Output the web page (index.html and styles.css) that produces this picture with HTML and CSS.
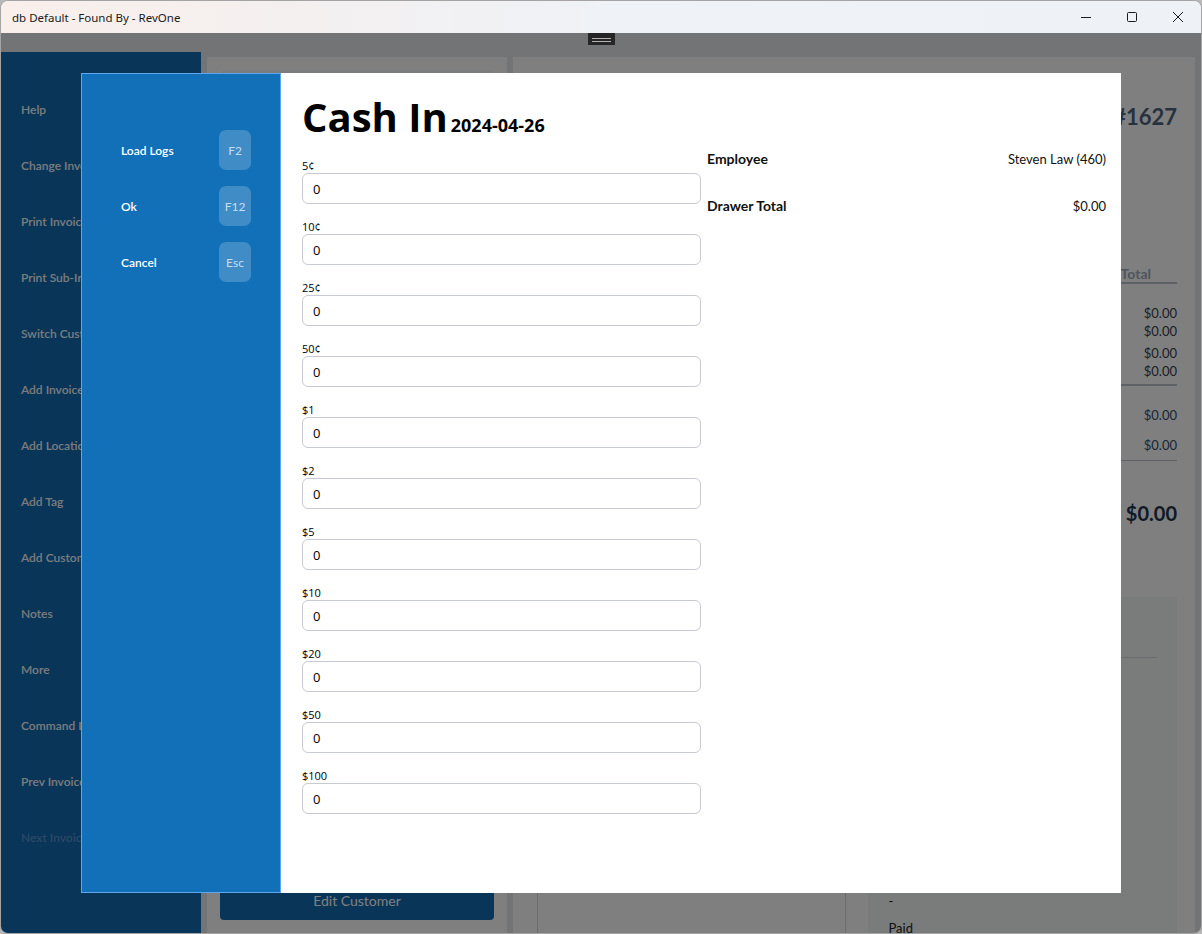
FILE: index.html
```html
<!DOCTYPE html>
<html lang="en">
<head>
<meta charset="utf-8">
<title>db Default - Found By - RevOne</title>
<link rel="stylesheet" href="styles.css">
</head>
<body>
<div class="window">
  <header class="titlebar">
    <span class="title">db Default - Found By - RevOne</span>
    <div class="controls">
      <span class="ctl"><svg width="12" height="12" viewBox="0 0 12 12"><path d="M1 6.5h10" stroke="#1b1b1b" stroke-width="1"/></svg></span>
      <span class="ctl"><svg width="12" height="12" viewBox="0 0 12 12"><rect x="1.5" y="1.5" width="9" height="9" rx="1" fill="none" stroke="#1b1b1b" stroke-width="1"/></svg></span>
      <span class="ctl"><svg width="12" height="12" viewBox="0 0 12 12"><path d="M1 1l10 10M11 1L1 11" stroke="#1b1b1b" stroke-width="1"/></svg></span>
    </div>
  </header>

  <div class="app">
    <div class="strip"></div>
    <div class="main">
      <nav class="sidebar">
        <div class="nav-item">Help</div>
        <div class="nav-item">Change Invoice Date</div>
        <div class="nav-item">Print Invoice</div>
        <div class="nav-item">Print Sub-Invoice</div>
        <div class="nav-item">Switch Customer</div>
        <div class="nav-item">Add Invoice Item</div>
        <div class="nav-item">Add Location</div>
        <div class="nav-item">Add Tag</div>
        <div class="nav-item">Add Customer</div>
        <div class="nav-item">Notes</div>
        <div class="nav-item">More</div>
        <div class="nav-item">Command Line</div>
        <div class="nav-item">Prev Invoice</div>
        <div class="nav-item disabled">Next Invoice</div>
      </nav>

      <section class="panel customer">
        <div class="card"></div>
        <div class="edit-btn">Edit Customer</div>
      </section>

      <section class="panel invoice">
        <div class="inv-number">#1627</div>
        <div class="totals">
          <div class="totals-head">Total</div>
          <div class="group first">
            <div class="amt">$0.00</div>
            <div class="amt">$0.00</div>
          </div>
          <div class="group second">
            <div class="amt">$0.00</div>
            <div class="amt">$0.00</div>
          </div>
          <div class="group third">
            <div class="amt blue">$0.00</div>
            <div class="amt blue gap">$0.00</div>
          </div>
          <div class="grand">$0.00</div>
        </div>
        <div class="lower">
          <div class="lower-left"></div>
          <div class="lower-right">
            <div class="lr-line"></div>
            <div class="lr-bottom">
              <div class="lr-item">-</div>
              <div class="lr-item">Paid</div>
            </div>
          </div>
        </div>
      </section>
    </div>

    <div class="overlay"></div>
    <div class="handle"><svg width="27" height="12" viewBox="0 0 27 12"><path d="M4 5.5h19M4 8.5h19" stroke="#b4b4b4" stroke-width="1"/></svg></div>

    <div class="modal">
      <aside class="modal-side">
        <div class="action"><span>Load Logs</span><kbd>F2</kbd></div>
        <div class="action"><span>Ok</span><kbd>F12</kbd></div>
        <div class="action"><span>Cancel</span><kbd>Esc</kbd></div>
      </aside>
      <div class="modal-body">
        <div class="cash-grid">
          <h1 class="heading">Cash In<span class="date">2024-04-26</span></h1>
          <div class="fields">
            <label class="field"><span class="lbl">5¢</span><input type="text" value="0"></label>
            <label class="field"><span class="lbl">10¢</span><input type="text" value="0"></label>
            <label class="field"><span class="lbl">25¢</span><input type="text" value="0"></label>
            <label class="field"><span class="lbl">50¢</span><input type="text" value="0"></label>
            <label class="field"><span class="lbl">$1</span><input type="text" value="0"></label>
            <label class="field"><span class="lbl">$2</span><input type="text" value="0"></label>
            <label class="field"><span class="lbl">$5</span><input type="text" value="0"></label>
            <label class="field"><span class="lbl">$10</span><input type="text" value="0"></label>
            <label class="field"><span class="lbl">$20</span><input type="text" value="0"></label>
            <label class="field"><span class="lbl">$50</span><input type="text" value="0"></label>
            <label class="field"><span class="lbl">$100</span><input type="text" value="0"></label>
          </div>
          <div class="summary">
            <div class="sum-row"><span class="sum-key">Employee</span><span class="sum-val">Steven Law (460)</span></div>
            <div class="sum-row"><span class="sum-key">Drawer Total</span><span class="sum-val">$0.00</span></div>
          </div>
        </div>
      </div>
    </div>
  </div>
</div>
</body>
</html>
```

FILE: styles.css
```css
* { box-sizing: border-box; }
html, body { margin: 0; padding: 0; }
body {
  width: 1202px;
  height: 934px;
  overflow: hidden;
  background: #b8b8b8;
  font-family: "Lato", "Noto Sans", sans-serif;
}

.window {
  width: 1202px;
  height: 934px;
  border: 1px solid #a4a4a4;
  border-radius: 8px;
  overflow: hidden;
  display: flex;
  flex-direction: column;
  background: #e6e8ec;
}

/* Title bar */
.titlebar {
  height: 32px;
  flex: none;
  display: flex;
  align-items: center;
  background: linear-gradient(90deg, #f9efeb 0%, #f4f0f0 25%, #eff2f6 50%, #eef2f7 100%);
}
.title {
  padding-left: 11px;
  font-family: "Noto Sans", "Open Sans", sans-serif;
  font-size: 11.5px;
  color: #1a1a1a;
}
.controls { margin-left: auto; display: flex; }
.ctl {
  width: 46px;
  height: 32px;
  display: flex;
  align-items: center;
  justify-content: center;
}

/* App behind the dialog */
.app {
  flex: 1;
  position: relative;
  display: flex;
  flex-direction: column;
  min-height: 0;
}
.strip { height: 19px; flex: none; }
.main {
  flex: 1;
  display: flex;
  gap: 6px;
  min-height: 0;
}
.sidebar {
  width: 200px;
  flex: none;
  background: #106ab0;
  padding-top: 30px;
}
.nav-item {
  height: 56px;
  line-height: 56px;
  padding-left: 20px;
  font-size: 12px;
  font-weight: 600;
  color: #f4f8fc;
  white-space: nowrap;
}
.nav-item.disabled { color: #5892cc; }

.panel {
  margin-top: 5px;
  background: #ffffff;
}
.customer {
  width: 300px;
  flex: none;
  padding: 13px;
  display: flex;
  flex-direction: column;
}
.card {
  flex: 1;
  background: #f4f6f8;
  border-radius: 6px;
}
.edit-btn {
  height: 38px;
  margin-top: 12px;
  background: #106ab0;
  border-radius: 4px;
  color: #ffffff;
  text-align: center;
  line-height: 38px;
  font-size: 14px;
}

.invoice {
  width: 682px;
  flex: none;
  padding: 0 18px 0 24px;
  display: flex;
  flex-direction: column;
}
.inv-number {
  margin-top: 45px;
  line-height: 30px;
  text-align: right;
  font-size: 22px;
  font-weight: 700;
  color: #50647c;
}
.totals {
  width: 330px;
  margin-left: auto;
  margin-top: 134px;
}
.totals-head {
  line-height: 16px;
  text-align: right;
  padding-right: 26px;
  font-size: 14px;
  font-weight: 700;
  color: #a0aab8;
  border-bottom: 2px solid #bcc2ca;
}
.amt {
  line-height: 18px;
  text-align: right;
  font-size: 13px;
  color: #36404e;
}
.amt.blue { color: #344e6c; }
.group.first { margin-top: 20px; }
.group.second {
  margin-top: 4px;
  padding-bottom: 4px;
  border-bottom: 2px solid #bcc2ca;
}
.group.third {
  margin-top: 20px;
  padding-bottom: 6px;
  border-bottom: 1px solid #bcc2ca;
}
.amt.gap { margin-top: 12px; }
.grand {
  margin-top: 38px;
  line-height: 28px;
  text-align: right;
  font-size: 20px;
  font-weight: 700;
  color: #1e344c;
}
.lower {
  flex: 1;
  margin-top: 70px;
  display: flex;
  gap: 22px;
  min-height: 0;
}
.lower-left {
  width: 310px;
  border-left: 1px solid #d8d8d8;
  border-right: 1px solid #d8d8d8;
}
.lower-right {
  width: 309px;
  background: #f4f8f8;
  padding: 20px 20px 0;
  display: flex;
  flex-direction: column;
  overflow: hidden;
}
.lr-line {
  height: 41px;
  border-bottom: 1px solid #d4d8dc;
}
.lr-bottom {
  margin-top: auto;
  margin-bottom: -4px;
}
.lr-item {
  line-height: 18px;
  font-size: 13px;
  color: #222222;
}
.lr-item:first-child { margin-bottom: 9px; }

/* Dim layer and handle */
.overlay {
  position: absolute;
  inset: 0;
  background: rgba(0, 0, 0, 0.5);
}
.handle {
  position: absolute;
  top: 0;
  left: 587px;
  width: 27px;
  height: 12px;
  background: #262626;
}
.handle svg { display: block; }

/* Dialog */
.modal {
  position: absolute;
  left: 80px;
  top: 40px;
  width: 1040px;
  height: 820px;
  display: flex;
  background: #ffffff;
}
.modal-side {
  width: 200px;
  flex: none;
  background: #1170b8;
  border: 1px solid #5ea6ee;
  padding: 56px 29px 0 39px;
}
.action {
  height: 40px;
  margin-bottom: 16px;
  display: flex;
  align-items: center;
  justify-content: space-between;
}
.action span {
  color: #ffffff;
  font-size: 12px;
  font-weight: 600;
}
.action kbd {
  width: 32px;
  height: 40px;
  border-radius: 7px;
  background: rgba(255, 255, 255, 0.2);
  color: #c8dcef;
  font-family: "Lato", sans-serif;
  font-size: 12px;
  display: flex;
  align-items: center;
  justify-content: center;
}

.modal-body {
  flex: 1;
  padding: 20px 15px 0 21px;
}
.cash-grid {
  display: grid;
  grid-template-columns: 399px 399px;
  grid-template-rows: auto 1fr;
  column-gap: 6px;
}
.heading {
  grid-column: 1;
  grid-row: 1;
  margin: 0 0 18px;
  height: 48px;
  font-family: "Open Sans", "Noto Sans", sans-serif;
  font-size: 40px;
  font-weight: 700;
  line-height: 48px;
  color: #000000;
  white-space: nowrap;
}
.date {
  margin-left: 3px;
  font-size: 18px;
  font-weight: 700;
  line-height: 1;
}
.fields {
  grid-column: 1;
  grid-row: 2;
  display: flex;
  flex-direction: column;
}
.field {
  display: flex;
  flex-direction: column;
  margin-bottom: 16px;
}
.lbl {
  font-family: "Open Sans", "Noto Sans", sans-serif;
  font-size: 11px;
  line-height: 14px;
  color: #000000;
}
.field input {
  height: 31px;
  width: 100%;
  margin: 0;
  border: 1px solid #c8cad3;
  border-radius: 6px;
  padding: 0 10px;
  font-family: "Open Sans", "Noto Sans", sans-serif;
  font-size: 13px;
  color: #000000;
  background: #ffffff;
  outline: none;
}
.summary {
  grid-column: 2;
  grid-row: 1 / span 2;
  padding-top: 56px;
}
.sum-row {
  display: flex;
  justify-content: space-between;
  align-items: baseline;
  line-height: 20px;
  margin-bottom: 27px;
  color: #111111;
}
.sum-key { font-weight: 700; font-size: 14px; }
.sum-val { font-size: 13px; }
```
